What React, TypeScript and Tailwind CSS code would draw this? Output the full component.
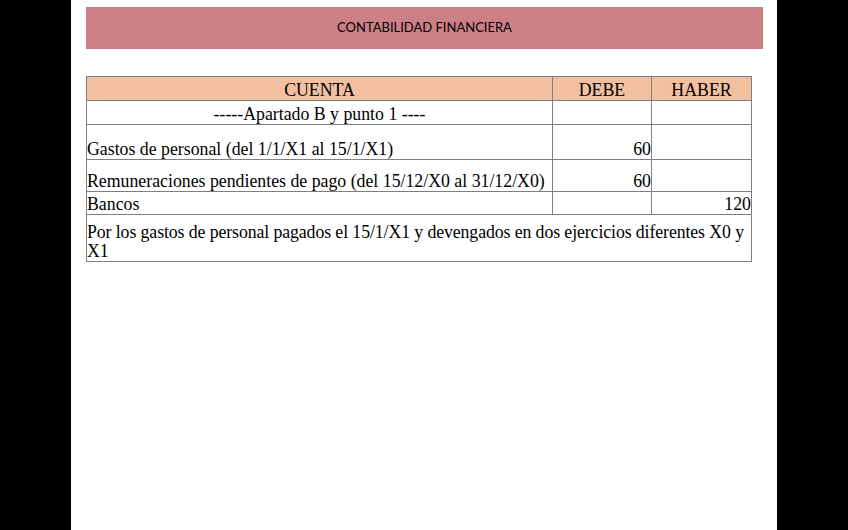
import React from "react";

const serif = { fontFamily: '"Liberation Serif", "Times New Roman", serif' };

export default function App() {
  return (
    <div className="flex h-[530px] w-[848px] bg-black">
      <div className="w-[71px] shrink-0 bg-black" />
      <div className="w-[706px] shrink-0 bg-white pl-[15px] pt-[7px]">
        <div
          className="flex h-[42px] w-[677px] items-center justify-center bg-[#cd7f86] text-[13px] text-black"
          style={{ fontFamily: 'Lato, "Liberation Sans", sans-serif' }}
        >
          CONTABILIDAD FINANCIERA
        </div>
        <table
          className="mt-[27px] w-[665px] table-fixed border-collapse text-[17.8px] leading-[19px] text-black"
          style={serif}
        >
          <colgroup>
            <col className="w-[466px]" />
            <col className="w-[99px]" />
            <col className="w-[100px]" />
          </colgroup>
          <tbody>
            <tr className="h-[24px] bg-[#f2bfa0]">
              <td className="border border-[#7f7f7f] p-0 text-center align-bottom">CUENTA</td>
              <td className="border border-[#7f7f7f] p-0 text-center align-bottom">DEBE</td>
              <td className="border border-[#7f7f7f] p-0 text-center align-bottom">HABER</td>
            </tr>
            <tr className="h-[24px]">
              <td className="border border-[#7f7f7f] p-0 text-center align-bottom">-----Apartado B y punto 1 ----</td>
              <td className="border border-[#7f7f7f] p-0" />
              <td className="border border-[#7f7f7f] p-0" />
            </tr>
            <tr className="h-[35px]">
              <td className="border border-[#7f7f7f] p-0 align-bottom">Gastos de personal (del 1/1/X1 al 15/1/X1)</td>
              <td className="border border-[#7f7f7f] p-0 text-right align-bottom">60</td>
              <td className="border border-[#7f7f7f] p-0" />
            </tr>
            <tr className="h-[32px]">
              <td className="border border-[#7f7f7f] p-0 align-bottom">Remuneraciones pendientes de pago (del 15/12/X0 al 31/12/X0)</td>
              <td className="border border-[#7f7f7f] p-0 text-right align-bottom">60</td>
              <td className="border border-[#7f7f7f] p-0" />
            </tr>
            <tr className="h-[23px]">
              <td className="border border-[#7f7f7f] p-0 align-bottom">Bancos</td>
              <td className="border border-[#7f7f7f] p-0" />
              <td className="border border-[#7f7f7f] p-0 text-right align-bottom">120</td>
            </tr>
            <tr className="h-[47px]">
              <td colSpan={3} className="border border-[#7f7f7f] p-0 align-bottom tracking-[-0.1px]">
                Por los gastos de personal pagados el 15/1/X1 y devengados en dos ejercicios diferentes X0 y X1
              </td>
            </tr>
          </tbody>
        </table>
      </div>
      <div className="w-[71px] shrink-0 bg-black" />
    </div>
  );
}
